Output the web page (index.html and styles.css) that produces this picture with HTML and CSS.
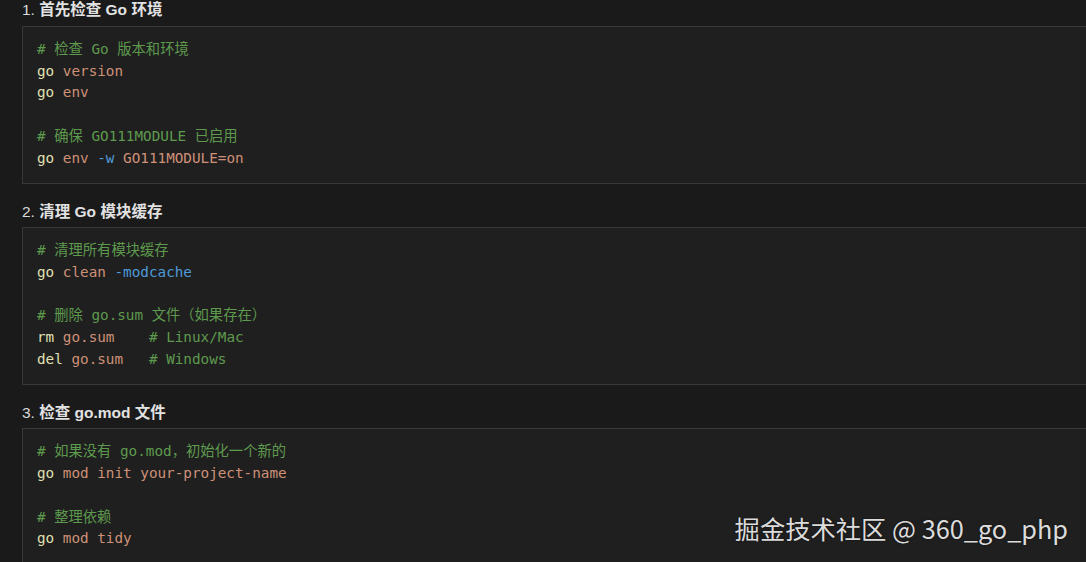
FILE: index.html
```html
<!DOCTYPE html>
<html lang="zh">
<head>
<meta charset="utf-8">
<link rel="stylesheet" href="styles.css">
</head>
<body>
<div class="page">
  <section class="step">
    <h4 class="title"><span class="num">1.</span> 首先检查 Go 环境</h4>
    <pre class="code"><span class="c"># 检查 Go 版本和环境</span>
<span class="k">go</span> <span class="a">version</span>
<span class="k">go</span> <span class="a">env</span>

<span class="c"># 确保 GO111MODULE 已启用</span>
<span class="k">go</span> <span class="a">env</span> <span class="f">-w</span> <span class="a">GO111MODULE=on</span></pre>
  </section>
  <section class="step">
    <h4 class="title"><span class="num">2.</span> 清理 Go 模块缓存</h4>
    <pre class="code"><span class="c"># 清理所有模块缓存</span>
<span class="k">go</span> <span class="a">clean</span> <span class="f">-modcache</span>

<span class="c"># 删除 go.sum 文件（如果存在）</span>
<span class="k">rm</span> <span class="a">go.sum</span>    <span class="c"># Linux/Mac</span>
<span class="k">del</span> <span class="a">go.sum</span>   <span class="c"># Windows</span></pre>
  </section>
  <section class="step">
    <h4 class="title"><span class="num">3.</span> 检查 go.mod 文件</h4>
    <pre class="code"><span class="c"># 如果没有 go.mod，初始化一个新的</span>
<span class="k">go</span> <span class="a">mod init your-project-name</span>

<span class="c"># 整理依赖</span>
<span class="k">go</span> <span class="a">mod tidy</span>
</pre>
  </section>
</div>
<div class="watermark">掘金技术社区 @ 360_go_php</div>
</body>
</html>
```
FILE: styles.css
```css
html, body {
  margin: 0;
  padding: 0;
  background: #1a1a1a;
  overflow: hidden;
  height: 562px;
}
.page {
  padding-left: 22px;
  margin-right: -20px;
}
.step {
  display: flex;
  flex-direction: column;
}
.title {
  margin: 0;
  height: 26px;
  display: flex;
  align-items: flex-end;
  padding-bottom: 6px;
  box-sizing: border-box;
  font-family: "Liberation Sans", "Noto Sans CJK SC", sans-serif;
  font-size: 15.5px;
  font-weight: bold;
  color: #e2e2e2;
  white-space: pre;
  line-height: 18px;
}
.step:first-child .title {
  height: 19px;
  padding-bottom: 0;
  align-items: flex-start;
  margin-top: 1px;
}
.step + .step .title {
  margin-top: 17px;
}
.num {
  font-weight: normal;
  color: #d8d8d8;
}
.code {
  margin: 6px 0 0 0;
  background: #1f1f1f;
  border: 1px solid #383838;
  padding: 12px 14px 14px 14px;
  font-family: "DejaVu Sans Mono", "Noto Sans CJK SC", monospace;
  font-size: 14.3px;
  line-height: 21.7px;
  color: #d4d4d4;
  white-space: pre;
}
.step + .step .code {
  margin-top: 0;
}
.c { color: #5e9a4e; }
.k { color: #e0e0b4; }
.a { color: #ce9178; }
.f { color: #4f9ad8; }
.watermark {
  position: absolute;
  right: 18px;
  top: 511px;
  font-family: "Noto Sans CJK SC", "Noto Sans", sans-serif;
  font-size: 25.3px;
  line-height: 34px;
  color: #dcdcdc;
  text-shadow: 0 0 2px rgba(0,0,0,0.6);
}
```
